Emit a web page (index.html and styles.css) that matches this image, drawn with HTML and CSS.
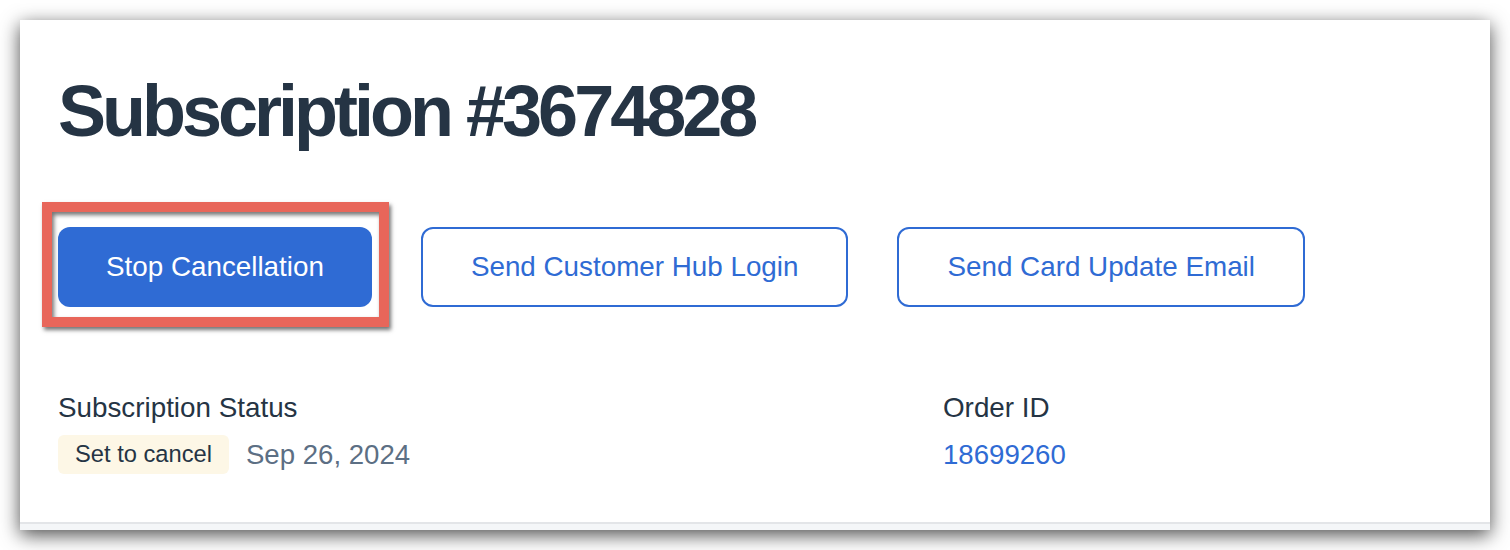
FILE: index.html
```html
<!DOCTYPE html>
<html lang="en">

<head>
    <meta charset="UTF-8">
    <meta name="viewport" content="width=device-width, initial-scale=1.0">
    <title>Subscription #3674828</title>
    <link rel="stylesheet" href="styles.css">
</head>

<body>
    <main class="card">
        <section class="summary">
            <h1>Subscription #3674828</h1>

            <div class="actions">
                <div class="highlight">
                    <button type="button" class="btn btn-primary">Stop Cancellation</button>
                    <span class="callout"></span>
                </div>
                <button type="button" class="btn btn-outline">Send Customer Hub Login</button>
                <button type="button" class="btn btn-outline">Send Card Update Email</button>
            </div>

            <div class="details">
                <div class="field">
                    <div class="field-label">Subscription Status</div>
                    <div class="field-value">
                        <span class="badge">Set to cancel</span>
                        <span class="muted">Sep 26, 2024</span>
                    </div>
                </div>
                <div class="field">
                    <div class="field-label">Order ID</div>
                    <div class="field-value">
                        <a href="#" class="link">18699260</a>
                    </div>
                </div>
            </div>
        </section>
        <div class="card-foot"></div>
    </main>
</body>

</html>
```

FILE: styles.css
```css
/* General styles */

* {
    box-sizing: border-box;
}

body {
    margin: 0;
    padding: 20px;
    background-color: #fff;
    font-family: "Liberation Sans", Arial, sans-serif;
    color: #253444;
}

.card {
    width: 1470px;
    height: 510px;
    display: flex;
    flex-direction: column;
    background-color: #fff;
    box-shadow: 0 5px 18px rgba(0, 0, 0, 0.7);
}

.summary {
    flex: 1;
    padding: 55px 38px 0;
}

h1 {
    margin: 0;
    font-size: 72px;
    line-height: 72px;
    font-weight: bold;
    letter-spacing: -4px;
    color: #253444;
}

/* Buttons */

.actions {
    display: flex;
    gap: 49px;
    margin-top: 80px;
}

.btn {
    height: 80px;
    padding: 0 48px;
    border-radius: 12px;
    font-family: inherit;
    font-size: 27.8px;
    cursor: pointer;
}

.btn-primary {
    border: none;
    background-color: #2f6bd4;
    color: #fff;
}

.btn-outline {
    border: 2px solid #2f6bd4;
    background-color: #fff;
    color: #2f6bd4;
}

.highlight {
    position: relative;
    display: flex;
}

/* Annotation box drawn over the button */
.callout {
    position: absolute;
    top: -25px;
    left: -16px;
    right: -17px;
    bottom: -20px;
    border: 10px solid #e8665a;
    box-shadow: 2px 3px 4px rgba(0, 0, 0, 0.55), inset 2px 3px 4px rgba(0, 0, 0, 0.55);
    pointer-events: none;
}

/* Details */

.details {
    display: grid;
    grid-template-columns: 885px 1fr;
    margin-top: 83px;
}

.field-label {
    font-size: 27.8px;
    line-height: 36px;
    color: #253444;
}

.field-value {
    display: flex;
    align-items: center;
    gap: 17px;
    margin-top: 9px;
    height: 39px;
}

.badge {
    height: 39px;
    padding: 0 17px;
    border-radius: 6px;
    background-color: #fdf7e6;
    font-size: 23.7px;
    line-height: 39px;
    color: #253444;
}

.muted {
    font-size: 27.6px;
    line-height: 36px;
    color: #5c6f84;
}

.link {
    font-size: 27.6px;
    line-height: 36px;
    color: #2f6bd4;
    text-decoration: none;
}

.card-foot {
    height: 8px;
    border-top: 2px solid #e3e5e8;
    background-color: #f4f6f8;
}
```
